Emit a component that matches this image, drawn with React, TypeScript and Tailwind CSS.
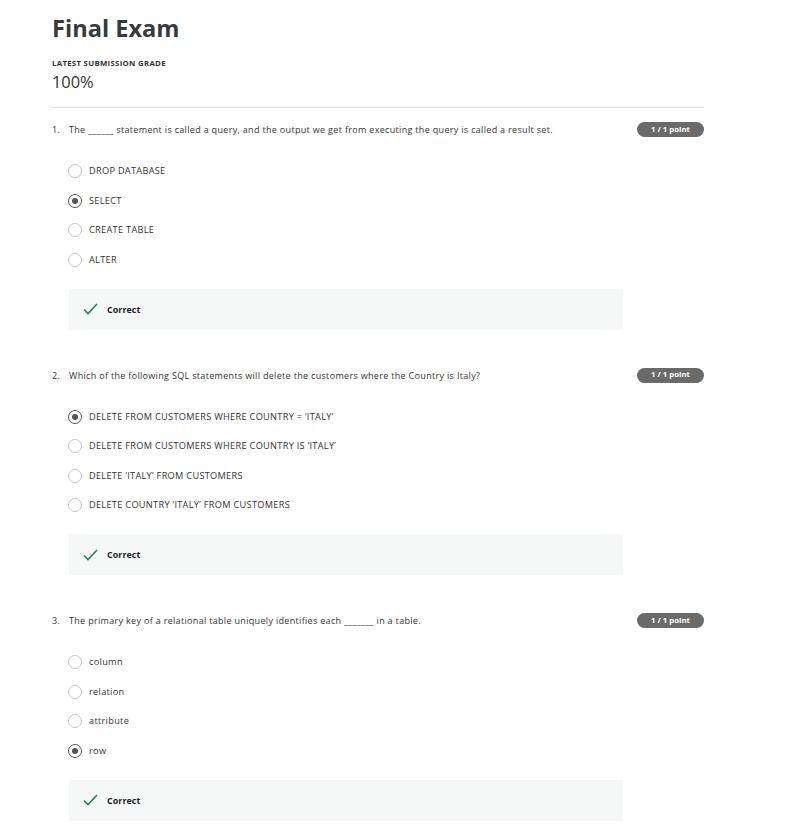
import React from 'react'

// ── Data ──────────────────────────────────────────────────────────────────────

type Question = {
  text: string
  options: string[]
  selected: number
}

const QUESTIONS: Question[] = [
  {
    text: 'The ______ statement is called a query, and the output we get from executing the query is called a result set.',
    options: ['DROP DATABASE', 'SELECT', 'CREATE TABLE', 'ALTER'],
    selected: 1,
  },
  {
    text: 'Which of the following SQL statements will delete the customers where the Country is Italy?',
    options: [
      'DELETE FROM CUSTOMERS WHERE COUNTRY = \u2018ITALY\u2019',
      'DELETE FROM CUSTOMERS WHERE COUNTRY IS \u2018ITALY\u2019',
      'DELETE \u2018ITALY\u2019 FROM CUSTOMERS',
      'DELETE COUNTRY \u2018ITALY\u2019 FROM CUSTOMERS',
    ],
    selected: 0,
  },
  {
    text: 'The primary key of a relational table uniquely identifies each _______ in a table.',
    options: ['column', 'relation', 'attribute', 'row'],
    selected: 3,
  },
]

// ── Radio ─────────────────────────────────────────────────────────────────────

function Radio({ checked }: { checked: boolean }) {
  return checked ? (
    <span className="flex-none w-[14px] h-[14px] rounded-full border-[1.5px] border-[#5c5c5c] flex items-center justify-center">
      <span className="w-[6px] h-[6px] rounded-full bg-[#555]" />
    </span>
  ) : (
    <span className="flex-none w-[14px] h-[14px] rounded-full border border-[#c4c4c4]" />
  )
}

// ── Question block ────────────────────────────────────────────────────────────

function QuestionBlock({ q, index }: { q: Question; index: number }) {
  return (
    <section>
      {/* Header: number, prompt, score badge */}
      <div className="flex items-start justify-between">
        <div className="flex text-[9px] tracking-[0.32px] leading-[15px] text-[#333]">
          <span className="w-[17px] flex-none">{index + 1}.</span>
          <span>{q.text}</span>
        </div>
        <span className="flex-none w-[67px] h-[15px] rounded-full bg-[#6a6a6a] text-white text-[7.8px] font-bold flex items-center justify-center">
          1 / 1 point
        </span>
      </div>

      {/* Options */}
      <div className="mt-[26.5px] ml-[16px] flex flex-col gap-[14.5px]">
        {q.options.map((opt, i) => (
          <div key={opt} className="flex items-center h-[15px] gap-[7px]">
            <Radio checked={i === q.selected} />
            <span className="text-[9.2px] tracking-[0.3px] text-[#333]">{opt}</span>
          </div>
        ))}
      </div>

      {/* Feedback */}
      <div className="mt-[21.5px] ml-[17px] w-[554px] h-[41px] bg-[#f5f8f7] flex items-center pl-[14px] gap-[9px]">
        <svg width="15" height="12" viewBox="0 0 15 12" fill="none">
          <path d="M1 6.5 L5 10.5 L14 1" stroke="#1f8354" strokeWidth="1.6" />
        </svg>
        <span className="text-[9px] leading-[13px] font-bold text-[#1f1f1f]">Correct</span>
      </div>
    </section>
  )
}

// ── Page ──────────────────────────────────────────────────────────────────────

export default function App() {
  return (
    <div className="min-h-screen bg-white" style={{ fontFamily: '"Open Sans", sans-serif' }}>
      <div className="w-[652px] ml-[52px] pt-[13px]">
        <h1 className="text-[23.6px] leading-[30px] font-bold text-[#373a3c]">Final Exam</h1>
        <p className="mt-[15px] text-[7.8px] leading-[10px] font-bold tracking-[0.3px] text-[#333]">
          LATEST SUBMISSION GRADE
        </p>
        <p className="mt-[4px] text-[16.4px] leading-[20px] text-[#333]">100%</p>
        <div className="mt-[15px] border-t border-[#e2e2e2]" />

        <div className="mt-[14px] flex flex-col gap-[38px]">
          {QUESTIONS.map((q, i) => (
            <QuestionBlock key={i} q={q} index={i} />
          ))}
        </div>
      </div>
    </div>
  )
}
